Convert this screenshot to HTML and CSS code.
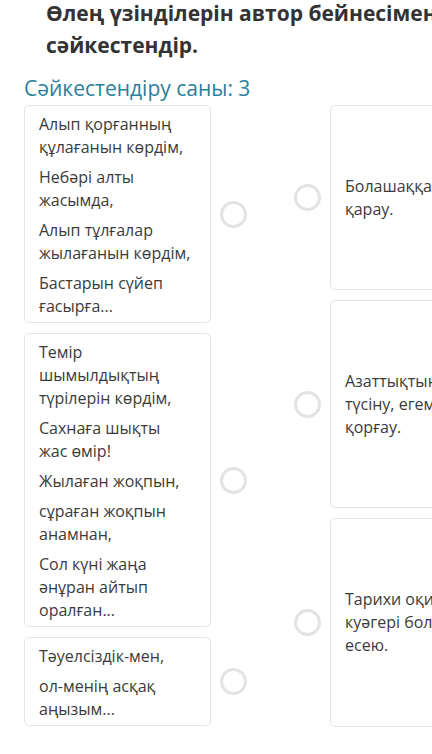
FILE: index.html
```html
<!DOCTYPE html>
<html lang="kk">
<head>
  <meta charset="UTF-8">
  <title>Сәйкестендіру</title>
  <link rel="stylesheet" href="styles.css">
</head>
<body>
  <h1 class="task-title">Өлең үзінділерін автор бейнесімен сәйкестендір.</h1>

  <div class="match-count">Сәйкестендіру саны: 3</div>

  <div class="board">
    <div class="col col-left">
      <div class="pair">
        <div class="card verse">
          <p>Алып қорғанның құлағанын көрдім,</p>
          <p>Небәрі алты жасымда,</p>
          <p>Алып тұлғалар жылағанын көрдім,</p>
          <p>Бастарын сүйеп ғасырға...</p>
        </div>
        <span class="dot"></span>
      </div>
      <div class="pair">
        <div class="card verse">
          <p>Темір шымылдықтың түрілерін көрдім,</p>
          <p>Сахнаға шықты жас өмір!</p>
          <p>Жылаған жоқпын,</p>
          <p>сұраған жоқпын анамнан,</p>
          <p>Сол күні жаңа әнұран айтып оралған...</p>
        </div>
        <span class="dot"></span>
      </div>
      <div class="pair">
        <div class="card verse">
          <p>Тәуелсіздік-мен,</p>
          <p>ол-менің асқақ аңызым...</p>
        </div>
        <span class="dot"></span>
      </div>
    </div>

    <div class="col col-right">
      <div class="pair answer-first">
        <span class="dot"></span>
        <div class="card answer">Болашаққа сеніммен<br>қарау.</div>
      </div>
      <div class="pair answer-second">
        <span class="dot"></span>
        <div class="card answer">Азаттықтың қадірін<br>түсіну, егемендікті<br>қорғау.</div>
      </div>
      <div class="pair answer-third">
        <span class="dot"></span>
        <div class="card answer">Тарихи оқиғалардың<br>куәгері болып<br>есею.</div>
      </div>
    </div>
  </div>
</body>
</html>
```

FILE: styles.css
```css
html, body { overflow: hidden; }
body { margin: 0; background: #fff; font-family: "Open Sans", Arial, sans-serif; color: #3b3b3b; }

.task-title {
  margin: -3px 0 0 46px;
  width: 420px;
  font-size: 21px;
  line-height: 32px;
  font-weight: 700;
  color: #333;
}

.match-count {
  margin: 13px 0 0 24px;
  font-size: 21px;
  line-height: 28px;
  color: #2a7f9b;
}

.board { display: flex; gap: 47px; margin-top: 3px; padding-left: 24px; }
.col { display: flex; flex-direction: column; gap: 10px; }

.pair { display: flex; align-items: center; }
.col-left .pair { gap: 9px; }
.col-right .pair { gap: 9px; }

.card {
  box-sizing: border-box;
  background: #fff;
  border: 1px solid #e4e4e4;
  border-radius: 5px;
  font-size: 16px;
  line-height: 23px;
}

.verse { width: 187px; padding: 7px 19px 4px 14px; }
.verse p { margin: 0 0 7px; }
.verse p:last-child { margin-bottom: 0; }

.answer {
  width: 200px;
  padding: 0 14px;
  display: flex;
  align-items: center;
  white-space: nowrap;
}
.answer-first .answer { height: 185px; }
.answer-second .answer { height: 208px; }
.answer-third .answer { height: 209px; }

.dot {
  flex: none;
  box-sizing: border-box;
  width: 27px;
  height: 27px;
  border: 3px solid #e3e3e3;
  border-radius: 50%;
  background: #fff;
}
```
